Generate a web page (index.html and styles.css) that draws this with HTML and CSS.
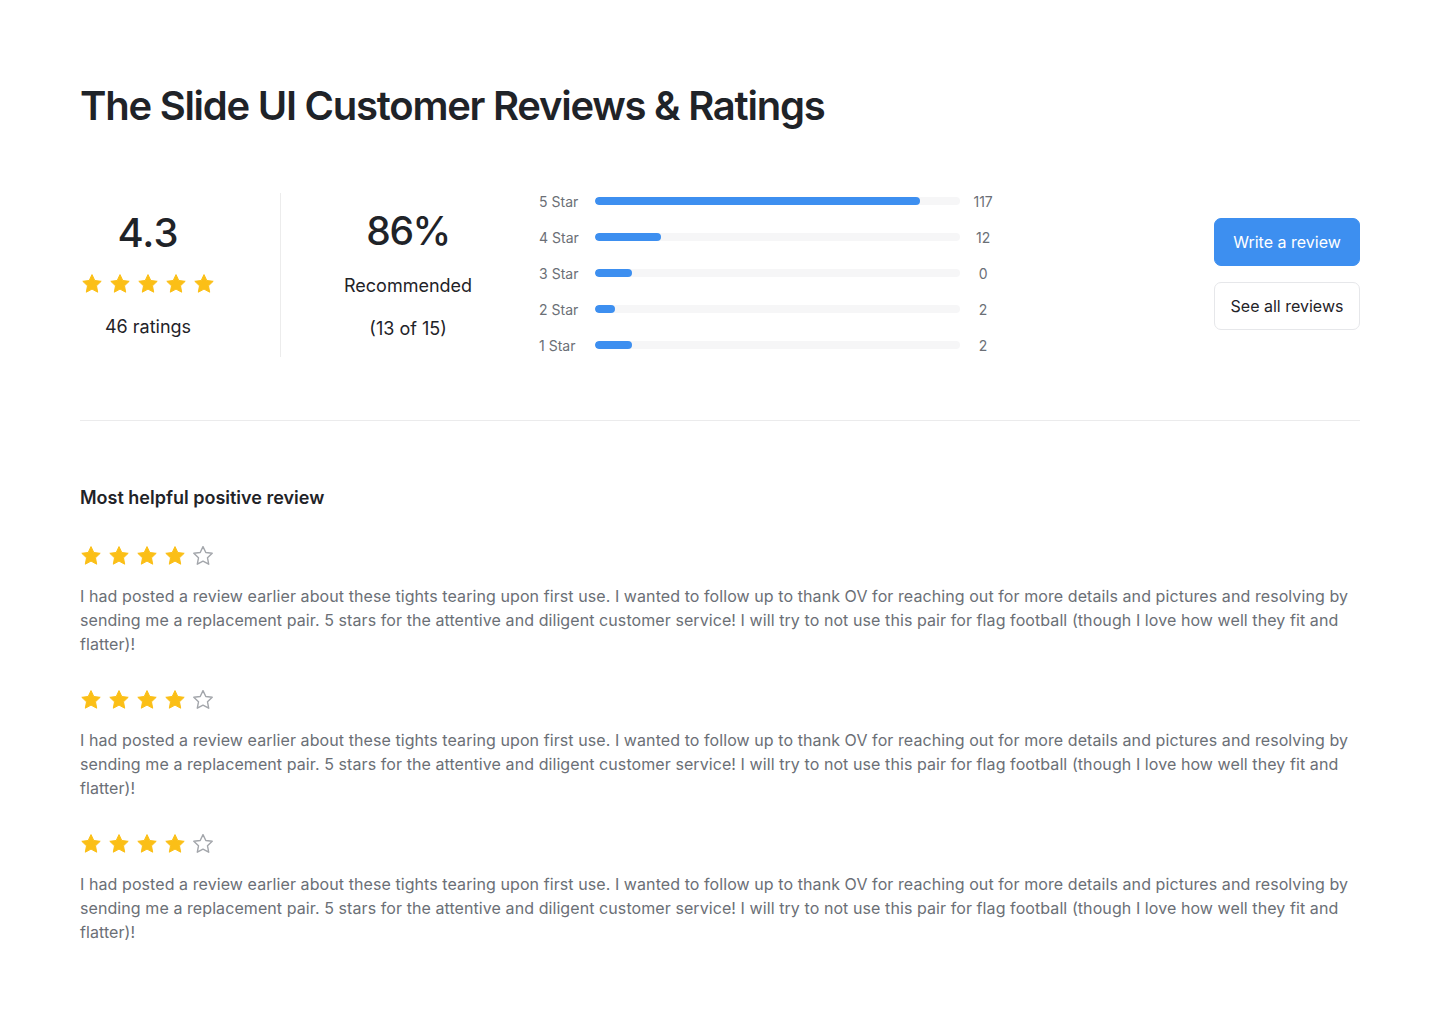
FILE: index.html
```html
<!DOCTYPE html>
<html lang="en">
<head>
<meta charset="utf-8">
<title>Customer Reviews</title>
<link rel="stylesheet" href="styles.css">
</head>
<body>
<svg width="0" height="0" class="defs" aria-hidden="true">
  <defs>
    <symbol id="star" viewBox="2 2 20 20">
      <path d="M12 2.6l2.8 5.9 6.4.8-4.7 4.5 1.2 6.4L12 17.1l-5.7 3.1 1.2-6.4-4.7-4.5 6.4-.8z" stroke-linejoin="round"/>
    </symbol>
  </defs>
</svg>
<main class="page">
  <h1 class="title">The Slide UI Customer Reviews &amp; Ratings</h1>

  <section class="summary">
    <div class="score">
      <div class="big">4.3</div>
      <div class="stars">
        <svg class="star on"><use href="#star"/></svg>
        <svg class="star on"><use href="#star"/></svg>
        <svg class="star on"><use href="#star"/></svg>
        <svg class="star on"><use href="#star"/></svg>
        <svg class="star on"><use href="#star"/></svg>
      </div>
      <div class="sub">46 ratings</div>
    </div>
    <div class="divider"></div>
    <div class="score recommend">
      <div class="big big-pct">86%</div>
      <div class="sub sub-mid">Recommended</div>
      <div class="sub">(13 of 15)</div>
    </div>
    <div class="bars">
      <div class="bar-row"><span class="bar-label">5 Star</span><div class="track"><div class="fill" style="width:89%"></div></div><span class="bar-num">117</span></div>
      <div class="bar-row"><span class="bar-label">4 Star</span><div class="track"><div class="fill" style="width:18%"></div></div><span class="bar-num">12</span></div>
      <div class="bar-row"><span class="bar-label">3 Star</span><div class="track"><div class="fill" style="width:10%"></div></div><span class="bar-num">0</span></div>
      <div class="bar-row"><span class="bar-label">2 Star</span><div class="track"><div class="fill" style="width:5.5%"></div></div><span class="bar-num">2</span></div>
      <div class="bar-row"><span class="bar-label">1 Star</span><div class="track"><div class="fill" style="width:10%"></div></div><span class="bar-num">2</span></div>
    </div>
    <div class="actions">
      <button class="btn btn-primary">Write a review</button>
      <button class="btn btn-outline">See all reviews</button>
    </div>
  </section>

  <hr class="rule">

  <section class="reviews">
    <h2 class="reviews-title">Most helpful positive review</h2>

    <article class="review">
      <div class="stars">
        <svg class="star on"><use href="#star"/></svg>
        <svg class="star on"><use href="#star"/></svg>
        <svg class="star on"><use href="#star"/></svg>
        <svg class="star on"><use href="#star"/></svg>
        <svg class="star off"><use href="#star"/></svg>
      </div>
      <p class="review-text">I had posted a review earlier about these tights tearing upon first use. I wanted to follow up to thank OV for reaching out for more details and pictures and resolving by sending me a replacement pair. 5 stars for the attentive and diligent customer service! I will try to not use this pair for flag football (though I love how well they fit and flatter)!</p>
    </article>

    <article class="review">
      <div class="stars">
        <svg class="star on"><use href="#star"/></svg>
        <svg class="star on"><use href="#star"/></svg>
        <svg class="star on"><use href="#star"/></svg>
        <svg class="star on"><use href="#star"/></svg>
        <svg class="star off"><use href="#star"/></svg>
      </div>
      <p class="review-text">I had posted a review earlier about these tights tearing upon first use. I wanted to follow up to thank OV for reaching out for more details and pictures and resolving by sending me a replacement pair. 5 stars for the attentive and diligent customer service! I will try to not use this pair for flag football (though I love how well they fit and flatter)!</p>
    </article>

    <article class="review">
      <div class="stars">
        <svg class="star on"><use href="#star"/></svg>
        <svg class="star on"><use href="#star"/></svg>
        <svg class="star on"><use href="#star"/></svg>
        <svg class="star on"><use href="#star"/></svg>
        <svg class="star off"><use href="#star"/></svg>
      </div>
      <p class="review-text">I had posted a review earlier about these tights tearing upon first use. I wanted to follow up to thank OV for reaching out for more details and pictures and resolving by sending me a replacement pair. 5 stars for the attentive and diligent customer service! I will try to not use this pair for flag football (though I love how well they fit and flatter)!</p>
    </article>
  </section>
</main>
</body>
</html>
```
FILE: styles.css
```css
* { box-sizing: border-box; }
html, body { margin: 0; padding: 0; background: #ffffff; }
body {
  font-family: Inter, "Noto Sans", "Liberation Sans", sans-serif;
  color: #1f2328;
}
.defs { position: absolute; width: 0; height: 0; overflow: hidden; }
.page { padding: 82px 80px 40px; }

.title {
  margin: 0;
  font-size: 40px;
  line-height: 48px;
  font-weight: 600;
  letter-spacing: -1.25px;
  color: #1f2328;
}

.summary {
  display: flex;
  align-items: stretch;
  margin-top: 63px;
  height: 164px;
}
.score {
  width: 136px;
  display: flex;
  flex-direction: column;
  align-items: center;
  padding-top: 16px;
}
.big {
  font-size: 40px;
  line-height: 48px;
  font-weight: 500;
  color: #1f2328;
}
.big-pct { letter-spacing: -1.5px; font-size: 39px; }
.stars { display: flex; gap: 8px; }
.score .stars { margin-top: 17px; }
.star { width: 20px; height: 20px; display: block; overflow: visible; }
.star.on { fill: #fbbf17; stroke: #fbbf17; stroke-width: 1; }
.star.off { fill: none; stroke: #a3a6ab; stroke-width: 1.4; }
.sub {
  font-size: 18px;
  line-height: 24px;
  color: #1f2328;
  margin-top: 21px;
}
.divider { width: 1px; background: #ececec; margin-left: 64px; }
.recommend { width: auto; margin-left: 63px; padding-top: 14px; }
.recommend .sub-mid { margin-top: 18px; }
.recommend .sub { margin-top: 19px; }

.bars {
  margin-left: 67px;
  margin-top: -2px;
  display: flex;
  flex-direction: column;
  gap: 16px;
}
.bar-row {
  display: flex;
  align-items: center;
  height: 20px;
}
.bar-label {
  width: 40px;
  font-size: 14px;
  color: #6b6f76;
  white-space: nowrap;
}
.track {
  width: 365px;
  height: 8px;
  margin-left: 16px;
  border-radius: 4px;
  background: #f6f6f7;
  overflow: hidden;
}
.fill { height: 100%; border-radius: 4px; background: #3d8ff0; }
.bar-num {
  width: 30px;
  margin-left: 8px;
  text-align: center;
  font-size: 14px;
  color: #6b6f76;
}

.actions {
  margin-left: auto;
  display: flex;
  flex-direction: column;
  justify-content: center;
  gap: 16px;
  padding-bottom: 2px;
}
.btn {
  width: 146px;
  height: 48px;
  border-radius: 7px;
  font-family: inherit;
  font-size: 16px;
  cursor: pointer;
}
.btn-primary { background: #3d8ff0; color: #ffffff; border: 1px solid #3d8ff0; }
.btn-outline { background: #ffffff; color: #1f2328; border: 1px solid #e6e7ea; }

.rule {
  margin: 63px 0 0;
  border: 0;
  height: 1px;
  background: #ebebec;
}

.reviews-title {
  margin: 65px 0 0;
  font-size: 18px;
  line-height: 24px;
  font-weight: 600;
  color: #1f2328;
}
.review { margin-top: 36px; }
.review + .review { margin-top: 34px; }
.review .stars { padding-left: 1px; }
.review-text {
  margin: 18px 0 0;
  font-size: 16px;
  line-height: 24px;
  letter-spacing: 0.08px;
  color: #6b6f76;
}
```
